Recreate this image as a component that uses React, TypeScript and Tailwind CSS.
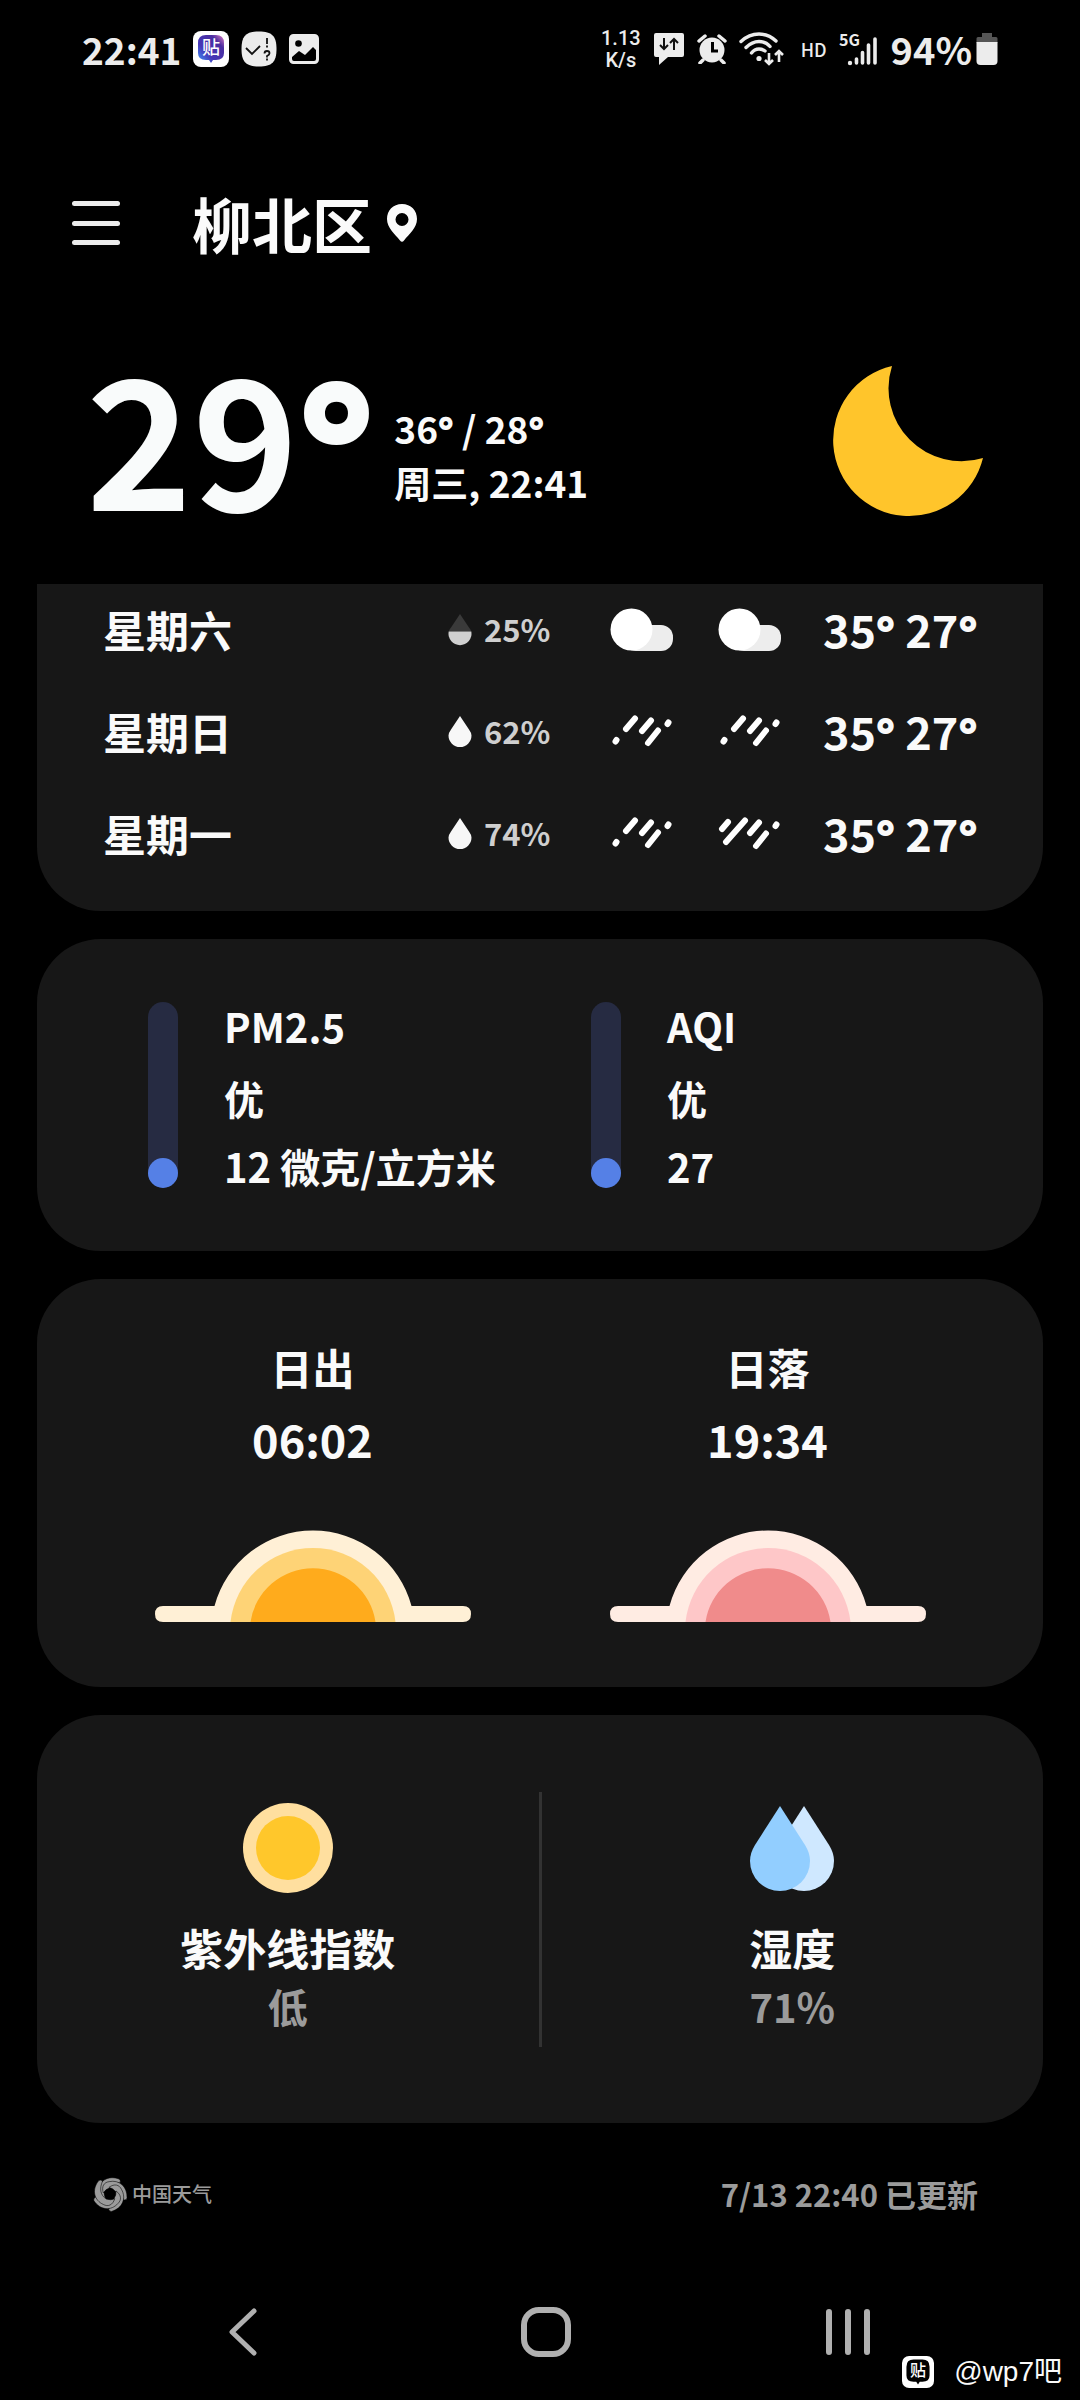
import type { ReactNode } from "react";

type Sky = "cloud" | "rain" | "heavy";

interface DayForecast {
  day: string;
  chance: number;
  am: Sky;
  pm: Sky;
  high: number;
  low: number;
}

const days: DayForecast[] = [
  { day: "星期六", chance: 25, am: "cloud", pm: "cloud", high: 35, low: 27 },
  { day: "星期日", chance: 62, am: "rain", pm: "rain", high: 35, low: 27 },
  { day: "星期一", chance: 74, am: "rain", pm: "heavy", high: 35, low: 27 },
];

// Open Sans has the wide, heavy degree ring
function Degree() {
  return <span className="font-['Open_Sans',sans-serif] leading-none font-extrabold">°</span>;
}

function TiebaBadge({ mono = false }: { mono?: boolean }) {
  return (
    <svg viewBox="0 0 36 36" className={mono ? "h-8 w-8" : "h-9 w-9"} aria-hidden="true">
      <defs>
        <linearGradient id="tieba" x1="0" y1="1" x2="1" y2="0">
          <stop offset="0" stopColor="#3f9bff" />
          <stop offset="0.35" stopColor="#4637b8" />
          <stop offset="0.75" stopColor="#4a2ea0" />
          <stop offset="1" stopColor="#e77fc4" />
        </linearGradient>
      </defs>
      <rect width="36" height="36" rx="8" fill="#fff" />
      <path
        d="M13 4h10q8 0 8 8v10q0 7-8 7h-3l-2 3-2-3h-3q-8 0-8-7V12q0-8 8-8z"
        fill={mono ? "#000" : "url(#tieba)"}
      />
      <text
        x="18"
        y="23"
        fill="#fff"
        fontSize="18"
        fontWeight="500"
        textAnchor="middle"
        fontFamily="'Noto Sans CJK SC', sans-serif"
      >
        贴
      </text>
    </svg>
  );
}

function ChecklistIcon() {
  return (
    <svg viewBox="0 0 36 36" className="h-9 w-9" aria-hidden="true">
      <path
        d="M18 0.500C31 0.500 35.500 5 35.500 18S31 35.500 18 35.500 0.500 31 0.500 18 5 0.500 18 0.500z"
        fill="#ececec"
      />
      <g fill="none" stroke="#111" strokeWidth="1.800">
        <path d="M5 17l6 6 8-8" />
        <path d="M26 7v6M26 14.500v2" />
        <path d="M23.500 22.500q0-2.500 2.500-2.500t2.500 2.300q0 1.500-2.500 2.700v1.500M26 27.500v2" />
      </g>
    </svg>
  );
}

function PhotoIcon() {
  return (
    <svg viewBox="0 0 30 30" className="h-[30px] w-[30px]" aria-hidden="true">
      <rect x="1.500" y="1.500" width="27" height="27" rx="3" fill="#ececec" stroke="#ececec" strokeWidth="3" />
      <circle cx="9.500" cy="9.500" r="3.300" fill="#000" />
      <path d="M3 23l7-6 6 4 8-8 3 3v9q0 2-2 2H5q-2 0-2-2z" fill="#000" />
    </svg>
  );
}

function TrafficIcon() {
  return (
    <svg viewBox="0 0 32 34" className="h-[34px] w-8" aria-hidden="true">
      <path d="M3 1h26q2 0 2 2v20q0 2-2 2H15l-9 8v-8H3q-2 0-2-2V3q0-2 2-2z" fill="#ececec" />
      <path d="M11 6v11M7 13l4 4 4-4M21 18V8M17 11l4-4 4 4" fill="none" stroke="#111" strokeWidth="2" />
    </svg>
  );
}

function AlarmIcon() {
  return (
    <svg viewBox="0 0 30 30" className="h-[30px] w-[30px]" aria-hidden="true">
      <circle cx="15" cy="16" r="12.500" fill="#ececec" />
      <path d="M2 7l6-5M28 7l-6-5M6 26l-3 3M24 26l3 3" stroke="#ececec" strokeWidth="3.500" strokeLinecap="round" />
      <path d="M15.500 8v9H21" fill="none" stroke="#000" strokeWidth="3" />
    </svg>
  );
}

function WifiIcon() {
  return (
    <svg viewBox="0 0 46 34" className="h-[34px] w-[46px]" aria-hidden="true">
      <g fill="none" stroke="#ececec" strokeWidth="3.400" strokeLinecap="round">
        <path d="M2 9.500Q10 2 20 2t17 7" />
        <path d="M7 15.500Q13 9.500 20 9.500t11 5" />
        <path d="M12.500 21q3-4 7.500-4 3.500 0 6 2" />
      </g>
      <circle cx="20" cy="26.500" r="2.600" fill="#ececec" />
      <path d="M30 21v10M26 28l4 4 4-4M40 30V20M36 23l4-4 4 4" fill="none" stroke="#ececec" strokeWidth="2.600" />
    </svg>
  );
}

function SignalIcon() {
  return (
    <svg viewBox="0 -8 40 50" className="h-[50px] w-10" aria-hidden="true">
      <text x="0" y="14" fill="#ececec" fontSize="16" fontWeight="700" fontFamily="'Noto Sans CJK SC', sans-serif">
        5G
      </text>
      <path
        d="M17.500 27v4M23.500 20.500v10.500M29.500 13v18M36 7v24"
        stroke="#ececec"
        strokeWidth="3.600"
        strokeLinecap="round"
      />
      <circle cx="11" cy="31" r="2.200" fill="#ececec" />
    </svg>
  );
}

function BatteryIcon() {
  return (
    <svg viewBox="0 0 22 32" className="h-8 w-[22px]" aria-hidden="true">
      <path d="M6 0h10v4h4q1.500 0 1.500 1.500V10H0.500V5.500Q0.500 4 2 4h4z" fill="#555" />
      <path d="M0.500 9h21v19q0 4-4 4h-13q-4 0-4-4z" fill="#ececec" />
    </svg>
  );
}

function StatusBar() {
  return (
    <div className="flex h-[98px] items-center pr-[82px] pl-[82px] text-[#ececec]">
      <span className="text-[37px] leading-10 font-bold">22:41</span>
      <div className="ml-3 flex items-center gap-3">
        <TiebaBadge />
        <ChecklistIcon />
        <PhotoIcon />
      </div>
      <div className="ml-auto flex items-center">
        <div className="flex flex-col items-center font-['Roboto',sans-serif] text-xl leading-[22px]">
          <span>1.13</span>
          <span>K/s</span>
        </div>
        <div className="ml-3 flex items-center gap-3">
          <TrafficIcon />
          <AlarmIcon />
          <WifiIcon />
        </div>
        <span className="ml-4 text-lg">HD</span>
        <div className="ml-3 flex items-center gap-3">
          <SignalIcon />
          <span className="text-[38px] leading-10 font-bold">94%</span>
        </div>
        <div className="ml-1">
          <BatteryIcon />
        </div>
      </div>
    </div>
  );
}

function Header() {
  return (
    <header className="flex h-[250px] items-center px-[72px]">
      <button type="button" aria-label="菜单" className="flex h-[46px] w-12 flex-col justify-between py-px">
        <span className="h-[5px] w-full rounded-full bg-[#ececec]" />
        <span className="h-[5px] w-full rounded-full bg-[#ececec]" />
        <span className="h-[5px] w-full rounded-full bg-[#ececec]" />
      </button>
      <h1 className="ml-[72px] text-[60px] leading-[72px] font-bold">柳北区</h1>
      <svg viewBox="0 0 32 38" className="ml-3.5 h-[38px] w-8" role="img" aria-label="当前位置">
        <path
          d="M16 0C7 0 1 6.500 1 15c0 9 8 15 13 21.500q2 2.500 4 0C23 30 31 24 31 15 31 6.500 25 0 16 0zm0 9a6.500 6.500 0 1 1 0 13 6.500 6.500 0 0 1 0-13z"
          fill="#fafafa"
          fillRule="evenodd"
        />
      </svg>
    </header>
  );
}

function CurrentWeather() {
  return (
    <section className="flex h-[236px] items-center pr-24 pb-[50px] pl-[86px]">
      <div className="pb-4 text-[180px] leading-[200px] font-bold text-[#f9fbfb]">
        29
        <Degree />
      </div>
      <div className="ml-5 flex flex-col pt-7 text-[37px] leading-[54px] font-bold">
        <span>
          36
          <Degree /> / 28
          <Degree />
        </span>
        <span>周三, 22:41</span>
      </div>
      <svg viewBox="0 0 150 152" className="ml-auto h-[152px] w-[150px] overflow-visible" role="img" aria-label="晴夜">
        <path d="M58 1A76 76 0 1 0 149 93A73 73 0 0 1 58 1z" fill="#ffc52b" />
      </svg>
    </section>
  );
}

function Card({ className, children }: { className: string; children: ReactNode }) {
  return <section className={`bg-[#171717] ${className}`}>{children}</section>;
}

function ChanceDrop({ chance }: { chance: number }) {
  return (
    <svg viewBox="0 0 24 34" className="h-[34px] w-6" aria-hidden="true">
      {chance < 50 ? (
        <>
          <path d="M12 2L3 15.500Q1 18 0.700 19.500H23.300Q23 18 21 15.500z" fill="#3a3a3a" />
          <path d="M0.700 19.500H23.300A11.500 11.500 0 1 1 0.700 19.500z" fill="#d0d0d0" />
        </>
      ) : (
        <path d="M12 2L3 15.500Q0.500 19 0.500 21.500a11.500 11.500 0 0 0 23 0Q23.500 19 21 15.500z" fill="#f7f7f7" />
      )}
    </svg>
  );
}

function SkyIcon({ sky }: { sky: Sky }) {
  if (sky === "cloud") {
    return (
      <svg viewBox="0 0 64 44" className="h-11 w-16" role="img" aria-label="多云">
        <rect x="14" y="18" width="49" height="26" rx="12" fill="#ededed" />
        <circle cx="21.500" cy="22.500" r="21" fill="#fff" />
      </svg>
    );
  }
  return (
    <svg
      viewBox="0 0 64 44"
      className="h-11 w-16"
      role="img"
      aria-label={sky === "rain" ? "小雨" : "大雨"}
      stroke="#fff"
      strokeWidth="6"
      strokeLinecap="round"
    >
      {sky === "rain" ? (
        <path d="M5.500 32.500l1-1.500M16 20l9-10.500M32 22l9-10.500M38 34l10-12.500M57.500 15l1-1.500" />
      ) : (
        <path d="M4 18l6-7M8 31L27 9.500M32 22l9-10.500M38 35l10-12.500M57.500 15l1-1.500" />
      )}
    </svg>
  );
}

// The list is scrolled a little way under the header
function DailyCard() {
  return (
    <Card className="overflow-hidden rounded-b-[64px] pr-16 pb-[27px] pl-[66px]">
      <table className="-mt-1.5 w-full">
        <tbody>
          {days.map((d) => (
            <tr key={d.day} className="h-[102px]">
              <th scope="row" className="text-left text-[43px] leading-[50px] font-bold">
                {d.day}
              </th>
              <td className="w-[162px]">
                <div className="flex items-center gap-3 text-[31px] leading-9 font-bold text-[#cfcfcf]">
                  <ChanceDrop chance={d.chance} />
                  {d.chance}%
                </div>
              </td>
              <td className="w-[108px]">
                <SkyIcon sky={d.am} />
              </td>
              <td className="w-[105px]">
                <SkyIcon sky={d.pm} />
              </td>
              <td className="w-[156px] text-[45px] leading-[50px] font-bold whitespace-nowrap">
                {d.high}
                <Degree /> {d.low}
                <Degree />
              </td>
            </tr>
          ))}
        </tbody>
      </table>
    </Card>
  );
}

function AirGauge({ name, level, value }: { name: string; level: string; value: string }) {
  return (
    <div className="flex gap-[46px]">
      <div className="flex h-[186px] w-[30px] items-end rounded-full bg-[#262b42]">
        <div className="h-[30px] w-[30px] rounded-full bg-[#5580e6]" />
      </div>
      <div className="flex flex-col text-[40px] leading-[48px] font-bold">
        <span>{name}</span>
        <span className="mt-6">{level}</span>
        <span className="mt-5">{value}</span>
      </div>
    </div>
  );
}

function HorizonSun({ outer, middle, inner }: { outer: string; middle: string; inner: string }) {
  return (
    <svg viewBox="0 0 316 94" className="h-[94px] w-[316px]" aria-hidden="true">
      <path
        d="M8 77H59.500A102 102 0 0 1 256.500 77H308q8 0 8 8t-8 8H8Q0 93 0 85t8-8z"
        fill={outer}
      />
      <path d="M75.500 93A83 83 0 0 1 240.500 93z" fill={middle} />
      <path d="M95.500 93A63.200 63.200 0 0 1 220.500 93z" fill={inner} />
    </svg>
  );
}

function SunTime({ label, time, children }: { label: string; time: string; children: ReactNode }) {
  return (
    <div className="flex w-[455px] flex-col items-center font-bold">
      <span className="text-[42px] leading-[60px]">{label}</span>
      <span className="mt-3 text-[45px] leading-[60px]">{time}</span>
      <div className="mt-15">{children}</div>
    </div>
  );
}

function DetailsCard() {
  return (
    <Card className="flex h-[408px] items-center rounded-[64px]">
      <div className="flex flex-1 flex-col items-center font-bold">
        <svg viewBox="0 0 90 90" className="h-[90px] w-[90px]" aria-hidden="true">
          <circle cx="45" cy="45" r="45" fill="#ffdf9f" />
          <circle cx="45" cy="45" r="32" fill="#ffc72b" />
        </svg>
        <span className="mt-6 text-[43px] leading-[60px]">紫外线指数</span>
        <span className="text-[40px] leading-[58px] text-[#9b9b9b]">低</span>
      </div>
      <div className="h-[255px] w-[3px] bg-[#323232]" />
      <div className="flex flex-1 flex-col items-center font-bold">
        <svg viewBox="0 0 86 90" className="h-[90px] w-[86px]" aria-hidden="true">
          <path d="M55 3L30 42Q25 50 25 58a30 30 0 0 0 60 0Q85 50 80 42z" fill="#cfe8ff" />
          <path d="M31 3L6 42Q1 50 1 58a30 30 0 0 0 60 0Q61 50 56 42z" fill="#92ceff" />
        </svg>
        <span className="mt-6 text-[43px] leading-[60px]">湿度</span>
        <span className="text-[40px] leading-[58px] text-[#9b9b9b]">71%</span>
      </div>
    </Card>
  );
}

function Footer() {
  return (
    <footer className="flex h-[142px] items-center justify-between pr-[102px] pl-[92px] text-[#9b9b9b]">
      <a href="#source" className="flex items-center gap-1 text-xl">
        <svg viewBox="0 0 36 36" className="h-9 w-9" aria-hidden="true">
          {[0, 72, 144, 216, 288].map((angle) => (
            <path
              key={angle}
              d="M6 15C7 5 16-1 27 3q2 1 1 4C20 6 14 9 12 16q0 5 3 8C8 24 5 20 6 15z"
              transform={`rotate(${angle} 18 18)`}
              fill="#9b9b9b"
              stroke="#000"
              strokeWidth="0.500"
            />
          ))}
        </svg>
        中国天气
      </a>
      <span className="text-[31px] leading-10 font-bold">7/13 22:40 已更新</span>
    </footer>
  );
}

function NavBar() {
  return (
    <nav className="flex h-[134px] items-center justify-between pr-[197px] pl-[208px] text-[#b0b0b0]">
      <button type="button" aria-label="返回" className="flex w-[70px] justify-center">
        <svg viewBox="0 0 30 50" className="h-[50px] w-[30px]" fill="none" stroke="currentColor" strokeWidth="5">
          <path d="M26 4L4 25l22 21" strokeLinecap="round" strokeLinejoin="round" />
        </svg>
      </button>
      <button type="button" aria-label="主屏幕" className="flex w-[70px] justify-center">
        <svg viewBox="0 0 50 50" className="h-[50px] w-[50px]" fill="none" stroke="currentColor" strokeWidth="6">
          <rect x="3" y="3" width="44" height="44" rx="15" />
        </svg>
      </button>
      <button type="button" aria-label="最近任务" className="flex w-[70px] justify-center">
        <svg viewBox="0 0 46 50" className="h-[50px] w-[46px]" stroke="currentColor" strokeWidth="6">
          <path d="M4 5v40M23 5v40M42 5v40" strokeLinecap="round" />
        </svg>
      </button>
    </nav>
  );
}

export default function App() {
  return (
    <div className="relative min-h-screen bg-black font-['Noto_Sans_CJK_SC','Noto_Sans',sans-serif] font-medium text-[#fafafa]">
      <StatusBar />
      <Header />
      <CurrentWeather />
      <main className="flex flex-col gap-7 px-[37px]">
        <DailyCard />
        <Card className="grid grid-cols-[443px_1fr] rounded-[64px] pt-[63px] pb-[61px] pl-[111px]">
          <AirGauge name="PM2.5" level="优" value="12 微克/立方米" />
          <AirGauge name="AQI" level="优" value="27" />
        </Card>
        <Card className="flex justify-center rounded-[64px] pt-[58px] pb-16">
          <SunTime label="日出" time="06:02">
            <HorizonSun outer="#fff0d6" middle="#fed376" inner="#ffab1c" />
          </SunTime>
          <SunTime label="日落" time="19:34">
            <HorizonSun outer="#ffece3" middle="#fec7c8" inner="#f08b8b" />
          </SunTime>
        </Card>
        <DetailsCard />
      </main>
      <Footer />
      <NavBar />
      <div className="absolute right-[18px] bottom-3 flex items-center gap-5 font-['Liberation_Sans','Noto_Sans_CJK_SC',sans-serif] text-[28px] leading-8 font-normal">
        <TiebaBadge mono />
        @wp7吧
      </div>
    </div>
  );
}
